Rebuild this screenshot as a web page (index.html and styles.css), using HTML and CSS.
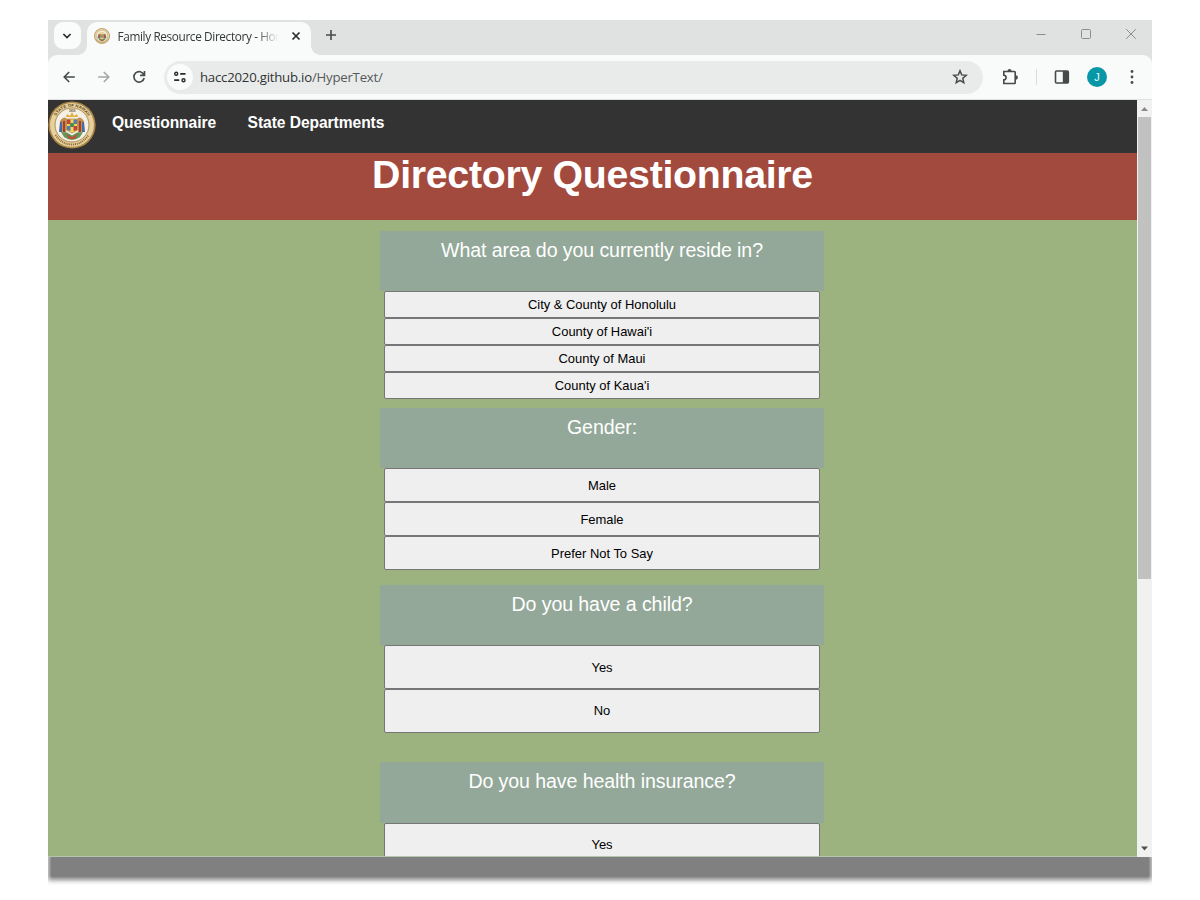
FILE: index.html
```
<!DOCTYPE html>
<html lang="en">
<head>
<meta charset="utf-8">
<title>Family Resource Directory</title>
<link rel="stylesheet" href="styles.css">
</head>
<body>
<div class="window">
  <header class="tabs">
    <div class="tab-search"><svg width="10" height="10" viewBox="0 0 10 10"><path d="M1.4 3 5 6.6 8.6 3" class="line dark"/></svg></div>
    <div class="tab">
      <svg class="favicon" width="16" height="16" viewBox="0 0 48 48"><use href="#seal"/></svg>
      <span class="tab-title">Family Resource Directory - Hon</span>
      <svg width="10" height="10" viewBox="0 0 10 10"><path d="m1.5 1.5 7 7M8.5 1.5l-7 7" class="line dark"/></svg>
    </div>
    <svg class="plus" width="12" height="12" viewBox="0 0 12 12"><path d="M6 1v10M1 6h10" class="line"/></svg>
    <div class="controls">
      <svg width="12" height="12" viewBox="0 0 12 12"><path d="M1.5 6.5h9" class="thin"/></svg>
      <svg width="12" height="12" viewBox="0 0 12 12"><rect x="1.5" y="1.5" width="9" height="9" rx="1" class="thin"/></svg>
      <svg width="12" height="12" viewBox="0 0 12 12"><path d="m1.2 1.2 9.6 9.6M10.8 1.2l-9.6 9.6" class="thin"/></svg>
    </div>
  </header>
  <div class="toolbar">
    <div class="history">
      <svg width="14" height="14" viewBox="0 0 14 14"><path d="M12.8 7H2.4M7.2 2 2.2 7l5 5" class="line"/></svg>
      <svg width="14" height="14" viewBox="0 0 14 14"><path d="M1.2 7h10.4M6.8 2l5 5-5 5" class="line pale"/></svg>
      <svg width="14" height="14" viewBox="0 0 14 14"><path d="M11.9 4.8A5.2 5.2 0 1 0 12.2 8M12.5 1v4.4H8.1" class="line"/></svg>
    </div>
    <div class="address">
      <div class="site"><svg width="14" height="12" viewBox="0 0 14 12"><path d="M7.2 2.8h5.3M1.2 9.2h5" class="line dark"/><circle cx="3.2" cy="2.8" r="1.5" class="line dark ring"/><circle cx="10.5" cy="9.2" r="1.5" class="line dark ring"/></svg></div>
      <span class="host">hacc2020.github.io<span class="path">/HyperText/</span></span>
      <svg class="star" width="16" height="16" viewBox="0 0 16 16"><path d="m8 1.8 1.7 4.1 4.5.4-3.4 3 1 4.4L8 11.4l-3.8 2.3 1-4.4-3.4-3 4.5-.4z" class="line star-line"/></svg>
    </div>
    <div class="actions">
      <svg width="18" height="18" viewBox="0 0 18 18"><path d="M2.8 3.5h10.7q.7 0 .7.7v10.6q0 .7-.7.7H2.8V11.8a2.3 2.3 0 0 0 0-4.6z" class="line"/><path d="M6.5 3a2 2 0 0 1 4 0zM14.7 7.3a2.2 2.2 0 0 1 0 4.4z" class="fill"/></svg>
      <i class="rule"></i>
      <svg class="panel" width="16" height="16" viewBox="0 0 16 16"><rect x="1.5" y="2" width="12.8" height="12" rx="1" class="line"/><path d="M8.8 2h5.5v12H8.8z" class="fill"/></svg>
      <b class="avatar">J</b>
      <svg class="dots" width="4" height="16" viewBox="0 0 4 16"><g class="fill"><circle cx="2" cy="2.5" r="1.4"/><circle cx="2" cy="8" r="1.4"/><circle cx="2" cy="13.5" r="1.4"/></g></svg>
    </div>
  </div>
  <div class="viewport">
    <main class="page">
      <nav class="nav">
        <svg width="48" height="50" viewBox="0 0 48 48">
          <defs>
            <path id="arc" d="M5.7 24a18.3 18.3 0 0 1 36.6 0"/>
            <g id="seal">
              <circle cx="24" cy="24" r="23.6" fill="#b58a43"/>
              <circle cx="24" cy="24" r="22.4" fill="#e6d0a0" stroke="#8c6a2a" stroke-width=".6"/>
              <circle cx="24" cy="24" r="17" fill="#f4f0e6" stroke="#a98545" stroke-width=".9"/>
              <path d="M12 20q3-5 6-3l1 3-1 12-6-2zM36 20q-3-5-6-3l-1 3 1 12 6-2z" fill="#c58c52"/>
              <path d="M12 21h2v10h-3zM36 21h-2v10h3z" fill="#456c9c"/>
              <path d="M15 20h2v11h-2zM31 20h2v11h-2z" fill="#a43f32"/>
              <path d="M18.5 18h11v11L24 32l-5.500-3z" fill="#f2d65e" stroke="#98752d" stroke-width=".6"/>
              <path d="M19 18.500h3.500v4.500H19zM25.500 25H29v4l-3.500 1z" fill="#c74136"/>
              <path d="M25.500 18.500H29V23h-3.500zM19 25h3.500v5L19 29z" fill="#557fa8"/>
              <circle cx="24" cy="24" r="2.200" fill="#4d8a4c"/>
              <path d="m18 16 1-3 3 2 2-4 2 4 3-2 1 3z" fill="#e0ad3e"/>
              <path d="m13 31 6 .5 5 3 5-3 6-.5-3 5q-8 6-16 0z" fill="#62975a"/>
              <path d="m18 33 6 3 6-3-3 5h-6z" fill="#ba523a"/>
              <path d="M7.500 34q6.500 9.500 16.500 9.500T40.500 34" fill="none" stroke="#8a672c" stroke-width="2" stroke-dasharray="1 .9"/>
            </g>
          </defs>
          <use href="#seal"/>
          <text class="seal-text"><textPath href="#arc" startOffset="50%" text-anchor="middle">STATE OF HAWAII</textPath></text>
          <text x="24" y="11.200" text-anchor="middle" class="seal-year">1959</text>
        </svg>
        <a class="link">Questionnaire</a>
        <a class="link">State Departments</a>
      </nav>
      <h1 class="title">Directory Questionnaire</h1>
      <div class="questions">
        <section class="question"><h2>What area do you currently reside in?</h2><div class="answers four"><button>City &amp; County of Honolulu</button><button>County of Hawai'i</button><button>County of Maui</button><button>County of Kaua'i</button></div></section>
        <section class="question"><h2>Gender:</h2><div class="answers three"><button>Male</button><button>Female</button><button>Prefer Not To Say</button></div></section>
        <section class="question"><h2>Do you have a child?</h2><div class="answers two"><button>Yes</button><button>No</button></div></section>
        <section class="question"><h2>Do you have health insurance?</h2><div class="answers two"><button>Yes</button></div></section>
      </div>
    </main>
    <aside class="scrollbar">
      <svg width="15" height="17" viewBox="0 0 15 17"><path d="m4 11 3.5-4 3.500 4z" fill="#8a8a8a"/></svg>
      <div class="thumb"></div>
      <svg class="down" width="15" height="17" viewBox="0 0 15 17"><path d="m4 6.500 3.500 4 3.500-4z" fill="#505050"/></svg>
    </aside>
  </div>
</div>
<div class="shadow-clip"><div class="shadow"></div></div>
</body>
</html>
```
FILE: styles.css
```
* { box-sizing: border-box; }
body { margin: 0; padding: 20px 48px 0; height: 900px; overflow: hidden; background: #fff; font-family: "Liberation Sans", Arial, sans-serif; }
.window { height: 837px; display: flex; flex-direction: column; overflow: hidden; background: #e0e2e1; }
svg { display: block; flex: none; }
.line { fill: none; stroke: #454a4b; stroke-width: 1.6; }
.line.dark { stroke: #292c2d; stroke-width: 1.7; }
.line.ring { stroke-width: 1.4; }
.line.pale { stroke: #a3a6a7; }
.line.star-line { stroke-width: 1.5; }
.thin { fill: none; stroke: #8b8d8d; stroke-width: 1; }
.fill { fill: #454a4b; }
.tabs { height: 35px; display: flex; align-items: flex-start; }
.tab-search { width: 27px; height: 27px; margin: 2px 0 0 6px; border-radius: 9px; background: #fafbfb; display: grid; place-items: center; }
.tab-search svg { margin-right: 1px; }
.tab { position: relative; width: 224px; height: 33px; margin: 2px 0 0 6px; padding: 0 10px 6px 7px; display: flex; align-items: center; border-radius: 10px 10px 0 0; background: #f9fafa; }
.tab::before, .tab::after { content: ""; position: absolute; bottom: 0; width: 9px; height: 9px; }
.tab::before { left: -9px; background: radial-gradient(circle at 0 0, transparent 8.5px, #f9fafa 9px); }
.tab::after { right: -9px; background: radial-gradient(circle at 100% 0, transparent 8.5px, #f9fafa 9px); }
.tab-title { width: 163px; margin: 0 11px 0 7.5px; overflow: hidden; white-space: nowrap; font: 11.8px/20px "Open Sans", sans-serif; letter-spacing: -.37px; color: #343838; -webkit-mask-image: linear-gradient(90deg, #000 86%, transparent 99%); mask-image: linear-gradient(90deg, #000 86%, transparent 99%); }
.plus { margin: 9px 0 0 14px; }
.controls { margin: 8px 15px 0 auto; display: flex; gap: 33px; }
.toolbar { height: 45px; flex: none; display: flex; align-items: center; padding: 0 18px 0 14px; background: #f9fafa; border-radius: 9px 9px 0 0; border-bottom: 1px solid #dfe1e1; }
.history { display: flex; gap: 21px; }
.address { width: 821px; height: 33px; margin-left: 18px; padding: 0 15px 0 3px; border-radius: 17px; background: #e9ebea; display: flex; align-items: center; }
.site { width: 26px; height: 26px; border-radius: 50%; background: #fafbfb; display: grid; place-items: center; }
.host { margin-left: 7px; font: 13.2px/20px "Open Sans", sans-serif; letter-spacing: -.22px; color: #303334; white-space: nowrap; }
.path { color: #56595a; }
.star { margin-left: auto; }
.actions { display: flex; align-items: center; flex: 1; padding-left: 18px; }
.rule { width: 1.5px; height: 16px; margin-left: 16.500px; background: #d5dfe3; }
.panel { margin-left: 17px; }
.avatar { width: 20px; height: 20px; margin-left: 17px; border-radius: 50%; background: #0797a7; color: #e9fbfb; font: 11px/20px "Liberation Sans", sans-serif; text-align: center; }
.dots { margin-left: 23px; }
.viewport { flex: 1; min-height: 0; display: flex; }
.page { width: 1089px; overflow: hidden; background: #9cb380; border-bottom: 1px solid #b7c2ab; }
.nav { height: 52.5px; display: flex; align-items: flex-start; background: #333; }
.link { margin: 13px 0 0 16px; font-size: 15.6px; letter-spacing: -.06px; line-height: 20px; font-weight: bold; color: #fff; white-space: nowrap; }
.link + .link { margin-left: 31.500px; }
.seal-text { font: bold 4.1px "Liberation Sans", sans-serif; fill: #51390c; letter-spacing: .2px; }
.seal-year { font: bold 3px "Liberation Sans", sans-serif; fill: #6d5427; }
.title { height: 67.5px; margin: 0; background: #a34a3f; color: #fff; text-align: center; font-size: 39.3px; letter-spacing: -.3px; line-height: 43px; }
.questions { margin: 10.5px 0 0 332px; width: 444px; display: grid; grid-auto-rows: 177.2px; }
.question h2 { height: 60.6px; margin: 0; padding-top: 7.3px; background: #93a899; color: #fff; text-align: center; font-size: 19.6px; letter-spacing: -.1px; line-height: 24px; font-weight: normal; }
.answers { display: flex; flex-direction: column; padding: 0 4px; }
.answers button { margin: 0; padding: 0; border: 1px solid #767676; border-radius: 2px; background: #efefef; color: #000; font: 12.95px "Liberation Sans", Arial, sans-serif; }
.four button { height: 27.1px; }
.three button { height: 34px; }
.two button { height: 43.6px; }
.scrollbar { width: 15px; display: flex; flex-direction: column; background: #f1f1f1; }
.thumb { width: 13px; height: 462px; margin-left: 1px; background: #c1c1c1; }
.down { margin-top: auto; }
.shadow-clip { height: 40px; overflow: hidden; }
.shadow { height: 20px; margin: 0 3px; background: #808080; box-shadow: 0 0 5px 3px #808080; }
```
